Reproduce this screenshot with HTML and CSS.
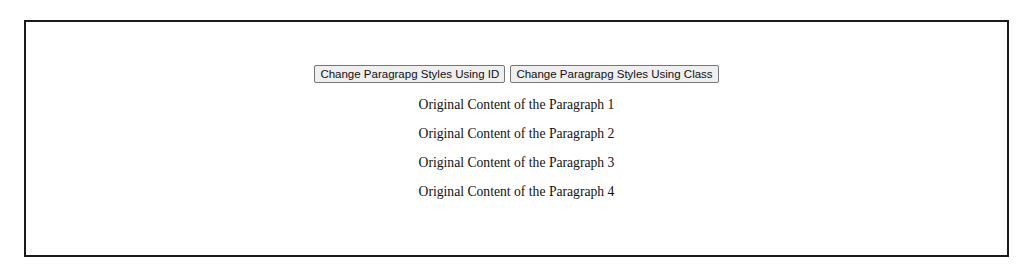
FILE: index.html
```html
<!DOCTYPE html>
<html>
<head>
<meta charset="utf-8">
<link rel="stylesheet" href="styles.css">
</head>
<body>
<div class="frame">
  <div class="content">
    <div class="buttons">
      <button class="btn">Change Paragrapg Styles Using ID</button>
      <button class="btn">Change Paragrapg Styles Using Class</button>
    </div>
    <p class="para">Original Content of the Paragraph 1</p>
    <p class="para">Original Content of the Paragraph 2</p>
    <p class="para">Original Content of the Paragraph 3</p>
    <p class="para">Original Content of the Paragraph 4</p>
  </div>
</div>
</body>
</html>
```

FILE: styles.css
```css
html, body {
  margin: 0;
  padding: 0;
  background: #fff;
}
body {
  padding: 20px 15px 20px 24px;
}
.frame {
  box-sizing: border-box;
  width: 985px;
  height: 237px;
  border: 2px solid #1a1a1a;
  display: flex;
  justify-content: center;
}
.content {
  padding-top: 43px;
  text-align: center;
  font-family: "Liberation Serif", "Times New Roman", serif;
  font-size: 13.65px;
  color: #111;
}
.buttons {
  display: flex;
  gap: 5px;
  justify-content: center;
}
.btn {
  font-family: "Liberation Sans", Arial, sans-serif;
  font-size: 11.5px;
  color: #111;
  background: #efefef;
  border: 1px solid #767676;
  border-radius: 2px;
  padding: 0 5px;
  height: 18px;
  line-height: 15px;
}
.para {
  margin: 13px 0;
  line-height: 16px;
}
.buttons + .para {
  margin-top: 14px;
}
```
